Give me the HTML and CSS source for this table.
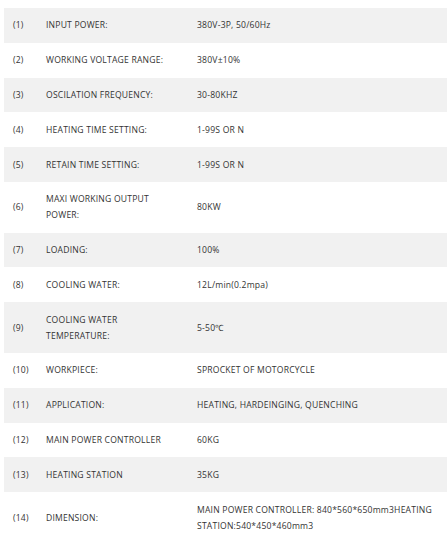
FILE: index.html
```html
<!DOCTYPE html>
<html>
<head>
<meta charset="utf-8">
<link rel="stylesheet" href="styles.css">
</head>
<body>
<table class="spec">
  <colgroup><col class="c-num"><col class="c-name"><col class="c-val"></colgroup>
  <tbody>
    <tr><td>(1)</td><td>INPUT POWER:</td><td>380V-3P, 50/60Hz</td></tr>
    <tr><td>(2)</td><td>WORKING VOLTAGE RANGE:</td><td>380V±10%</td></tr>
    <tr><td>(3)</td><td>OSCILATION FREQUENCY:</td><td>30-80KHZ</td></tr>
    <tr><td>(4)</td><td>HEATING TIME SETTING:</td><td>1-99S OR N</td></tr>
    <tr><td>(5)</td><td>RETAIN TIME SETTING:</td><td>1-99S OR N</td></tr>
    <tr><td>(6)</td><td>MAXI WORKING OUTPUT POWER:</td><td>80KW</td></tr>
    <tr><td>(7)</td><td>LOADING:</td><td>100%</td></tr>
    <tr><td>(8)</td><td>COOLING WATER:</td><td>12L/min(0.2mpa)</td></tr>
    <tr><td>(9)</td><td>COOLING WATER TEMPERATURE:</td><td>5-50℃</td></tr>
    <tr><td>(10)</td><td>WORKPIECE:</td><td>SPROCKET OF MOTORCYCLE</td></tr>
    <tr><td>(11)</td><td>APPLICATION:</td><td>HEATING, HARDEINGING, QUENCHING</td></tr>
    <tr><td>(12)</td><td>MAIN POWER CONTROLLER</td><td>60KG</td></tr>
    <tr><td>(13)</td><td>HEATING STATION</td><td>35KG</td></tr>
    <tr><td>(14)</td><td>DIMENSION:</td><td>MAIN POWER CONTROLLER: 840*560*650mm3HEATING STATION:540*450*460mm3</td></tr>
  </tbody>
</table>
</body>
</html>
```
FILE: styles.css
```css
html, body {
  margin: 0;
  padding: 0;
  background: #ffffff;
}
body {
  padding: 8px 0 0 4px;
  font-family: "Open Sans", "Liberation Sans", sans-serif;
  font-size: 8.6px;
  color: #333333;
}
.spec {
  border-collapse: collapse;
  table-layout: fixed;
  width: 443px;
}
.c-num { width: 33px; }
.c-name { width: 151px; }
.c-val { width: 259px; }
.spec td {
  padding: 9.4px 9px;
  line-height: 16px;
  vertical-align: middle;
  letter-spacing: 0.2px;
}
.spec tr:nth-child(odd) {
  background: #f1f1f1;
}
```
